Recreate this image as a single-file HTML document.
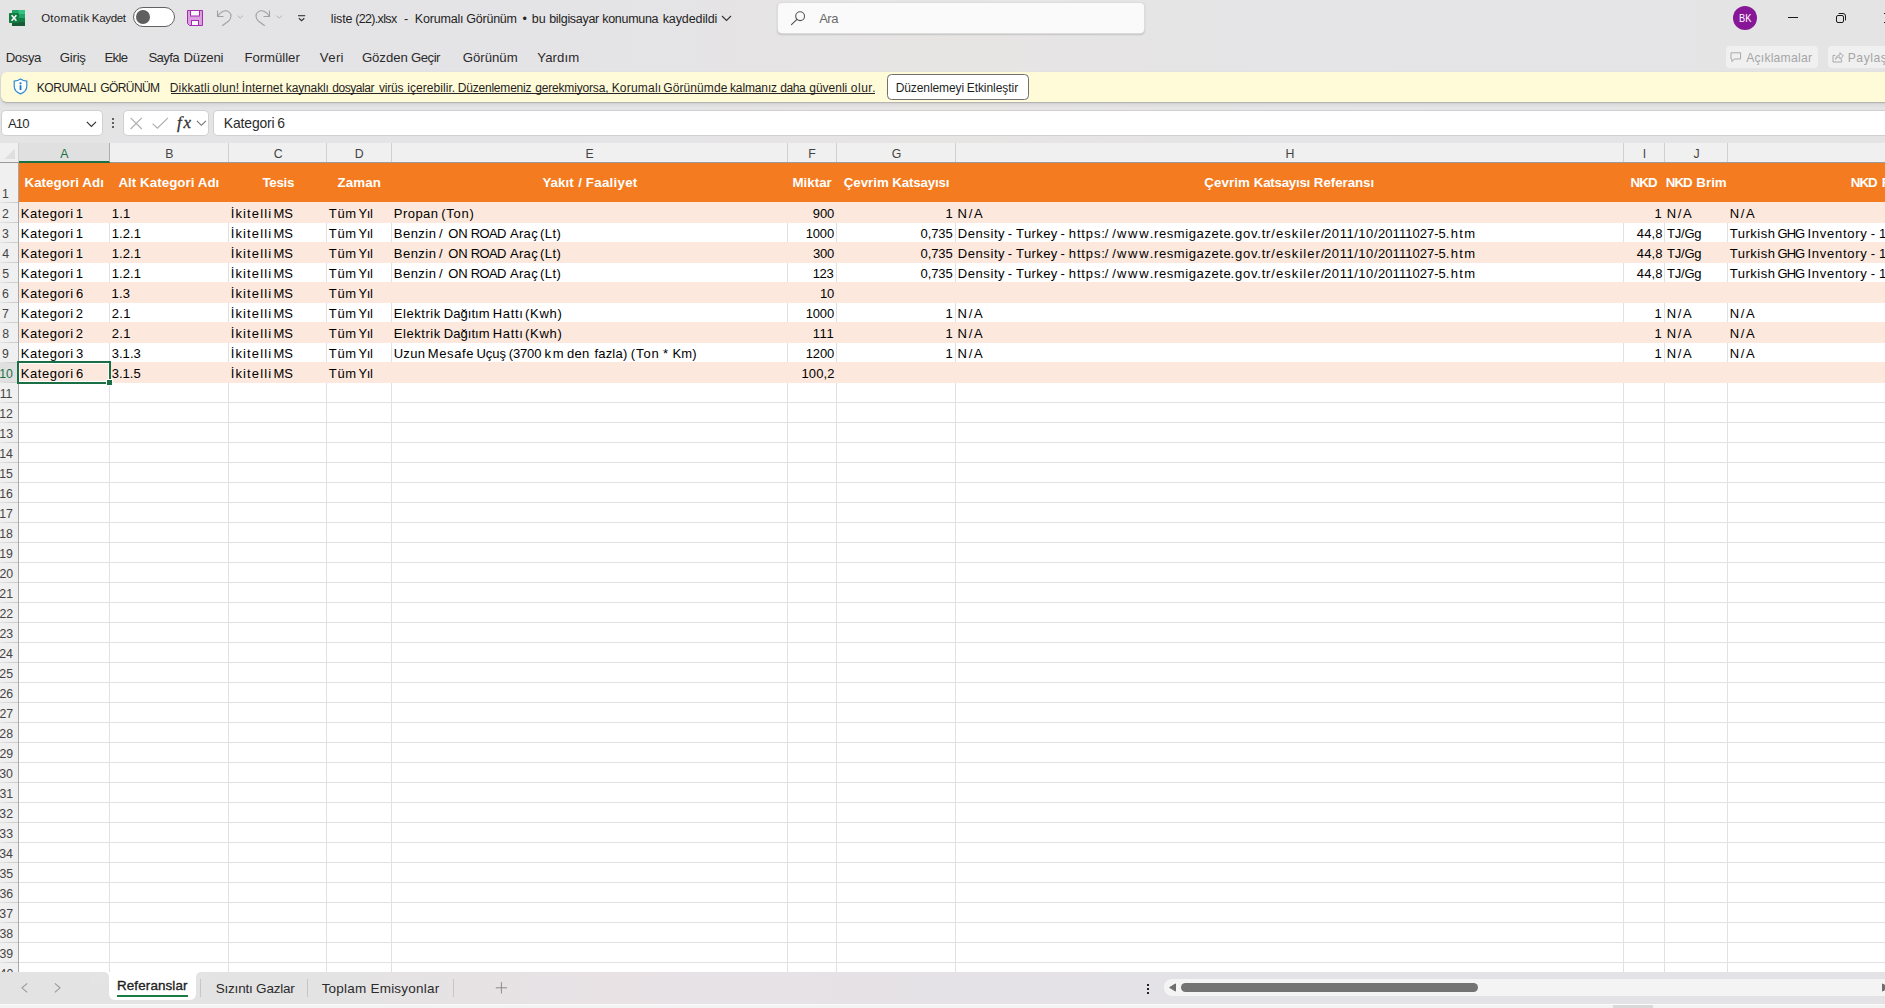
<!DOCTYPE html>
<html><head><meta charset="utf-8"><title>Excel</title>
<style>
html,body{margin:0;padding:0;}
body{width:1885px;height:1008px;overflow:hidden;position:relative;background:#e4e4e4;font-family:"Liberation Sans",sans-serif;}
.a{position:absolute;}
.t{position:absolute;white-space:nowrap;line-height:1;transform-origin:0 0;}
svg{position:absolute;overflow:visible;}
</style></head><body>

<div class="a" style="left:0;top:0;width:1885px;height:143px;background:linear-gradient(90deg,#e4e4e5 0%,#e4e3e6 30%,#e7e5e4 50%,#e5e4e6 68%,#e4e4e5 100%)"></div>
<svg style="left:8px;top:9px" width="18" height="18" viewBox="0 0 18 18">
<rect x="4" y="1" width="13" height="4" fill="#21a366"/><rect x="10.5" y="1" width="6.5" height="4" fill="#33c481"/>
<rect x="4" y="5" width="13" height="4" fill="#107c41"/><rect x="10.5" y="5" width="6.5" height="4" fill="#21a366"/>
<rect x="4" y="9" width="13" height="4" fill="#185c37"/><rect x="10.5" y="9" width="6.5" height="4" fill="#107c41"/>
<rect x="4" y="13" width="13" height="4" fill="#185c37"/>
<rect x="1" y="4" width="10" height="10" rx="0.8" fill="#107c41"/>
<path d="M3.6 6.2 L8.4 11.8 M8.4 6.2 L3.6 11.8" stroke="#fff" stroke-width="1.5" fill="none"/>
</svg>
<div class="a" style="left:133px;top:7px;width:40px;height:18px;border:1px solid #616161;border-radius:10px;background:#fff"></div>
<div class="a" style="left:136px;top:10.1px;width:13.8px;height:13.8px;border-radius:50%;background:#5f5f5f"></div>
<svg style="left:187px;top:10px" width="16" height="16" viewBox="0 0 16 16">
<path d="M0.5 0.5 H15.5 V15.5 H2.5 L0.5 13.5 Z" fill="#dc9fe0" stroke="#a32cb0" stroke-width="1"/>
<rect x="3.5" y="0.5" width="9" height="5.5" fill="#fafafa" stroke="#a32cb0"/>
<rect x="4.5" y="10.5" width="7" height="5" fill="#fafafa" stroke="#a32cb0"/>
</svg>
<svg style="left:216px;top:9px" width="17" height="18" viewBox="0 0 17 18">
<path d="M1.5 1.5 V7.5 H7.5" fill="none" stroke="#a0a0a0" stroke-width="1.1"/>
<path d="M1.7 7.3 C4 3, 9 0.2, 12.6 2.6 C16 5, 15.6 9.6, 12.4 12.2 L6.2 16.8" fill="none" stroke="#a0a0a0" stroke-width="1.1"/>
</svg>
<svg style="left:237.1px;top:15.4px" width="7" height="5" viewBox="0 0 7 5"><path d="M0.5 0.7 L3.2 3.1 L5.9 0.7" fill="none" stroke="#b4b4b4" stroke-width="1"/></svg>
<svg style="left:254.4px;top:9px" width="17" height="18" viewBox="0 0 17 18">
<path d="M15.5 1.5 V7.5 H9.5" fill="none" stroke="#a0a0a0" stroke-width="1.1"/>
<path d="M15.3 7.3 C13 3, 8 0.2, 4.4 2.6 C1 5, 1.4 9.6, 4.6 12.2 L10.8 16.8" fill="none" stroke="#a0a0a0" stroke-width="1.1"/>
</svg>
<svg style="left:276.1px;top:15.4px" width="7" height="5" viewBox="0 0 7 5"><path d="M0.5 0.7 L3.2 3.1 L5.9 0.7" fill="none" stroke="#b4b4b4" stroke-width="1"/></svg>
<svg style="left:297px;top:14px" width="10" height="8" viewBox="0 0 10 8"><path d="M1 1.7 H8.2" stroke="#333" stroke-width="1.1"/><path d="M1.9 4.2 L4.6 6.6 L7.3 4.2" fill="none" stroke="#333" stroke-width="1.2"/></svg>
<svg style="left:721px;top:15px" width="11" height="7" viewBox="0 0 11 7"><path d="M1 1 L5.5 5.5 L10 1" fill="none" stroke="#333" stroke-width="1.1"/></svg>
<div class="a" style="left:778px;top:3px;width:366px;height:30px;background:#fafafa;border-radius:4px;box-shadow:0 0 0 1px #dcdcdc, 0 1px 1.5px 0.5px #c4c4c4"></div>
<svg style="left:790px;top:10px" width="16" height="16" viewBox="0 0 16 16"><circle cx="10.1" cy="6.2" r="4.4" fill="none" stroke="#555" stroke-width="1.1"/><path d="M6.9 9.4 L1.5 14.6" stroke="#555" stroke-width="1.2" stroke-linecap="round"/></svg>
<div class="a" style="left:1733px;top:6px;width:24px;height:24px;border-radius:50%;background:#881798"></div>
<div class="a" style="left:1788px;top:17px;width:10px;height:1px;background:#1a1a1a"></div>
<svg style="left:1835px;top:12px" width="12" height="12" viewBox="0 0 12 12"><rect x="1.5" y="3.5" width="7" height="7" rx="1.5" fill="none" stroke="#1a1a1a" stroke-width="1"/><path d="M3.6 1.5 H8 A2.5 2.5 0 0 1 10.5 4 V8.4" fill="none" stroke="#1a1a1a" stroke-width="1"/></svg>
<svg style="left:1883.5px;top:12.5px" width="10" height="10" viewBox="0 0 10 10"><path d="M0 0 L10 10 M10 0 L0 10" stroke="#1a1a1a" stroke-width="1"/></svg>
<div class="a" style="left:1726px;top:46px;width:92px;height:22px;background:#f0f0f0;border-radius:4px"></div>
<svg style="left:1730px;top:51.5px" width="12" height="11" viewBox="0 0 12 11"><path d="M1 0.8 H10.6 V7 H4.4 L2 9.6 V7 H1 Z" fill="none" stroke="#a8a8a8" stroke-width="1"/></svg>
<div class="a" style="left:1828px;top:46px;width:70px;height:22px;background:#f0f0f0;border-radius:4px"></div>
<svg style="left:1832px;top:51px" width="12" height="12" viewBox="0 0 12 12"><path d="M3.4 4.4 H1 V11 H9.6 V8.2" fill="none" stroke="#a8a8a8" stroke-width="1"/><path d="M3.6 8.4 C4 5.4 6 4 8 4 V1.6 L11.4 5 L8 8.2 V6 C6.2 6 4.8 6.6 3.6 8.4 Z" fill="none" stroke="#a8a8a8" stroke-width="1"/></svg>
<div class="a" style="left:1px;top:72px;width:1890px;height:30px;background:#FFFAD7;border-radius:6px 0 0 6px;box-shadow:0 1px 1px rgba(0,0,0,0.17),0 2px 4px rgba(0,0,0,0.10)"></div>
<svg style="left:13.1px;top:78.1px" width="15" height="17" viewBox="0 0 15 17">
<path d="M7.5 1 C5.6 2.4 3.6 3 1.2 3.1 V8.2 C1.2 11.8 3.8 14.4 7.5 15.9 C11.2 14.4 13.8 11.8 13.8 8.2 V3.1 C11.4 3 9.4 2.4 7.5 1 Z" fill="#fff" stroke="#2e8ad8" stroke-width="1.2"/>
<circle cx="7.5" cy="5.3" r="1.1" fill="#1878d0"/><rect x="6.6" y="7.2" width="1.8" height="4.8" fill="#1878d0"/></svg>
<div class="a" style="left:170.5px;top:93px;width:704px;height:1px;background:#262626"></div>
<div class="a" style="left:887px;top:74px;width:140px;height:23.5px;border:1px solid #707070;border-radius:4.5px;background:#fff"></div>
<div class="a" style="left:2px;top:111px;width:100px;height:24px;background:#fff;border-radius:4px;box-shadow:0 0 0 1px #d0d0d0"></div>
<svg style="left:86px;top:121px" width="11" height="7" viewBox="0 0 11 7"><path d="M0.8 0.9 L5.4 5.5 L10 0.9" fill="none" stroke="#333" stroke-width="1.2"/></svg>
<div class="a" style="left:112.2px;top:118.3px;width:1.6px;height:1.6px;background:#444;border-radius:50%"></div>
<div class="a" style="left:112.2px;top:122.2px;width:1.6px;height:1.6px;background:#444;border-radius:50%"></div>
<div class="a" style="left:112.2px;top:126.1px;width:1.6px;height:1.6px;background:#444;border-radius:50%"></div>
<div class="a" style="left:124px;top:111px;width:84px;height:24px;background:#fff;border-radius:4px;box-shadow:0 0 0 1px #d0d0d0"></div>
<svg style="left:130px;top:117px" width="13" height="13" viewBox="0 0 13 13"><path d="M0.6 0.8 L11.8 12 M11.8 0.8 L0.6 12" stroke="#adadad" stroke-width="1.12"/></svg>
<svg style="left:152px;top:117px" width="17" height="13" viewBox="0 0 17 13"><path d="M0.6 6.6 L5.4 11.2 L16 0.8" fill="none" stroke="#adadad" stroke-width="1.12"/></svg>
<svg style="left:195.8px;top:120.2px" width="11" height="7" viewBox="0 0 11 7"><path d="M0.9 0.9 L5.4 5.3 L9.9 0.9" fill="none" stroke="#757575" stroke-width="1.15"/></svg>
<div class="a" style="left:214px;top:111px;width:1690px;height:24px;background:#fff;border-radius:4px;box-shadow:0 0 0 1px #d0d0d0"></div>
<div class="a" style="left:0;top:143px;width:1885px;height:829px;background:#fff"></div>
<div class="a" style="left:0;top:143px;width:1885px;height:19px;background:#f0f0f0"></div>
<div class="a" style="left:0;top:162px;width:1885px;height:1px;background:#9b9b9b"></div>
<div class="a" style="left:19px;top:143px;width:90px;height:18px;background:#e0e0e0"></div>
<div class="a" style="left:19px;top:161px;width:91px;height:2px;background:#1a7044"></div>
<svg style="left:4px;top:148px" width="12" height="12" viewBox="0 0 12 12"><path d="M11 0.5 V11 H0.5 Z" fill="#dfdfdf"/></svg>
<div class="a" style="left:18px;top:143px;width:1px;height:19px;background:#d0d0d0"></div>
<div class="a" style="left:109px;top:143px;width:1px;height:19px;background:#adadad"></div>
<div class="a" style="left:228px;top:143px;width:1px;height:19px;background:#d0d0d0"></div>
<div class="a" style="left:326px;top:143px;width:1px;height:19px;background:#d0d0d0"></div>
<div class="a" style="left:391px;top:143px;width:1px;height:19px;background:#d0d0d0"></div>
<div class="a" style="left:787px;top:143px;width:1px;height:19px;background:#d0d0d0"></div>
<div class="a" style="left:836px;top:143px;width:1px;height:19px;background:#d0d0d0"></div>
<div class="a" style="left:955px;top:143px;width:1px;height:19px;background:#d0d0d0"></div>
<div class="a" style="left:1623px;top:143px;width:1px;height:19px;background:#d0d0d0"></div>
<div class="a" style="left:1664px;top:143px;width:1px;height:19px;background:#d0d0d0"></div>
<div class="a" style="left:1727px;top:143px;width:1px;height:19px;background:#d0d0d0"></div>
<div class="a" style="left:0;top:163px;width:18px;height:809px;background:#f0f0f0"></div>
<div class="a" style="left:18px;top:163px;width:1px;height:809px;background:#a8a8a8"></div>
<div class="a" style="left:0;top:363px;width:18px;height:19px;background:#e0e0e0"></div>
<div class="a" style="left:0;top:202px;width:18px;height:1px;background:linear-gradient(90deg,#e4e4e4,#d2d2d2 60%,#cccccc)"></div>
<div class="a" style="left:0;top:222px;width:18px;height:1px;background:linear-gradient(90deg,#e4e4e4,#d2d2d2 60%,#cccccc)"></div>
<div class="a" style="left:0;top:242px;width:18px;height:1px;background:linear-gradient(90deg,#e4e4e4,#d2d2d2 60%,#cccccc)"></div>
<div class="a" style="left:0;top:262px;width:18px;height:1px;background:linear-gradient(90deg,#e4e4e4,#d2d2d2 60%,#cccccc)"></div>
<div class="a" style="left:0;top:282px;width:18px;height:1px;background:linear-gradient(90deg,#e4e4e4,#d2d2d2 60%,#cccccc)"></div>
<div class="a" style="left:0;top:302px;width:18px;height:1px;background:linear-gradient(90deg,#e4e4e4,#d2d2d2 60%,#cccccc)"></div>
<div class="a" style="left:0;top:322px;width:18px;height:1px;background:linear-gradient(90deg,#e4e4e4,#d2d2d2 60%,#cccccc)"></div>
<div class="a" style="left:0;top:342px;width:18px;height:1px;background:linear-gradient(90deg,#e4e4e4,#d2d2d2 60%,#cccccc)"></div>
<div class="a" style="left:0;top:362px;width:18px;height:1px;background:linear-gradient(90deg,#e4e4e4,#d2d2d2 60%,#cccccc)"></div>
<div class="a" style="left:0;top:382px;width:18px;height:1px;background:linear-gradient(90deg,#e4e4e4,#d2d2d2 60%,#cccccc)"></div>
<div class="a" style="left:0;top:402px;width:18px;height:1px;background:linear-gradient(90deg,#e4e4e4,#d2d2d2 60%,#cccccc)"></div>
<div class="a" style="left:0;top:422px;width:18px;height:1px;background:linear-gradient(90deg,#e4e4e4,#d2d2d2 60%,#cccccc)"></div>
<div class="a" style="left:0;top:442px;width:18px;height:1px;background:linear-gradient(90deg,#e4e4e4,#d2d2d2 60%,#cccccc)"></div>
<div class="a" style="left:0;top:462px;width:18px;height:1px;background:linear-gradient(90deg,#e4e4e4,#d2d2d2 60%,#cccccc)"></div>
<div class="a" style="left:0;top:482px;width:18px;height:1px;background:linear-gradient(90deg,#e4e4e4,#d2d2d2 60%,#cccccc)"></div>
<div class="a" style="left:0;top:502px;width:18px;height:1px;background:linear-gradient(90deg,#e4e4e4,#d2d2d2 60%,#cccccc)"></div>
<div class="a" style="left:0;top:522px;width:18px;height:1px;background:linear-gradient(90deg,#e4e4e4,#d2d2d2 60%,#cccccc)"></div>
<div class="a" style="left:0;top:542px;width:18px;height:1px;background:linear-gradient(90deg,#e4e4e4,#d2d2d2 60%,#cccccc)"></div>
<div class="a" style="left:0;top:562px;width:18px;height:1px;background:linear-gradient(90deg,#e4e4e4,#d2d2d2 60%,#cccccc)"></div>
<div class="a" style="left:0;top:582px;width:18px;height:1px;background:linear-gradient(90deg,#e4e4e4,#d2d2d2 60%,#cccccc)"></div>
<div class="a" style="left:0;top:602px;width:18px;height:1px;background:linear-gradient(90deg,#e4e4e4,#d2d2d2 60%,#cccccc)"></div>
<div class="a" style="left:0;top:622px;width:18px;height:1px;background:linear-gradient(90deg,#e4e4e4,#d2d2d2 60%,#cccccc)"></div>
<div class="a" style="left:0;top:642px;width:18px;height:1px;background:linear-gradient(90deg,#e4e4e4,#d2d2d2 60%,#cccccc)"></div>
<div class="a" style="left:0;top:662px;width:18px;height:1px;background:linear-gradient(90deg,#e4e4e4,#d2d2d2 60%,#cccccc)"></div>
<div class="a" style="left:0;top:682px;width:18px;height:1px;background:linear-gradient(90deg,#e4e4e4,#d2d2d2 60%,#cccccc)"></div>
<div class="a" style="left:0;top:702px;width:18px;height:1px;background:linear-gradient(90deg,#e4e4e4,#d2d2d2 60%,#cccccc)"></div>
<div class="a" style="left:0;top:722px;width:18px;height:1px;background:linear-gradient(90deg,#e4e4e4,#d2d2d2 60%,#cccccc)"></div>
<div class="a" style="left:0;top:742px;width:18px;height:1px;background:linear-gradient(90deg,#e4e4e4,#d2d2d2 60%,#cccccc)"></div>
<div class="a" style="left:0;top:762px;width:18px;height:1px;background:linear-gradient(90deg,#e4e4e4,#d2d2d2 60%,#cccccc)"></div>
<div class="a" style="left:0;top:782px;width:18px;height:1px;background:linear-gradient(90deg,#e4e4e4,#d2d2d2 60%,#cccccc)"></div>
<div class="a" style="left:0;top:802px;width:18px;height:1px;background:linear-gradient(90deg,#e4e4e4,#d2d2d2 60%,#cccccc)"></div>
<div class="a" style="left:0;top:822px;width:18px;height:1px;background:linear-gradient(90deg,#e4e4e4,#d2d2d2 60%,#cccccc)"></div>
<div class="a" style="left:0;top:842px;width:18px;height:1px;background:linear-gradient(90deg,#e4e4e4,#d2d2d2 60%,#cccccc)"></div>
<div class="a" style="left:0;top:862px;width:18px;height:1px;background:linear-gradient(90deg,#e4e4e4,#d2d2d2 60%,#cccccc)"></div>
<div class="a" style="left:0;top:882px;width:18px;height:1px;background:linear-gradient(90deg,#e4e4e4,#d2d2d2 60%,#cccccc)"></div>
<div class="a" style="left:0;top:902px;width:18px;height:1px;background:linear-gradient(90deg,#e4e4e4,#d2d2d2 60%,#cccccc)"></div>
<div class="a" style="left:0;top:922px;width:18px;height:1px;background:linear-gradient(90deg,#e4e4e4,#d2d2d2 60%,#cccccc)"></div>
<div class="a" style="left:0;top:942px;width:18px;height:1px;background:linear-gradient(90deg,#e4e4e4,#d2d2d2 60%,#cccccc)"></div>
<div class="a" style="left:0;top:962px;width:18px;height:1px;background:linear-gradient(90deg,#e4e4e4,#d2d2d2 60%,#cccccc)"></div>
<div class="a" style="left:19px;top:382px;width:1866px;height:1px;background:#e1e1e1"></div>
<div class="a" style="left:19px;top:402px;width:1866px;height:1px;background:#e1e1e1"></div>
<div class="a" style="left:19px;top:422px;width:1866px;height:1px;background:#e1e1e1"></div>
<div class="a" style="left:19px;top:442px;width:1866px;height:1px;background:#e1e1e1"></div>
<div class="a" style="left:19px;top:462px;width:1866px;height:1px;background:#e1e1e1"></div>
<div class="a" style="left:19px;top:482px;width:1866px;height:1px;background:#e1e1e1"></div>
<div class="a" style="left:19px;top:502px;width:1866px;height:1px;background:#e1e1e1"></div>
<div class="a" style="left:19px;top:522px;width:1866px;height:1px;background:#e1e1e1"></div>
<div class="a" style="left:19px;top:542px;width:1866px;height:1px;background:#e1e1e1"></div>
<div class="a" style="left:19px;top:562px;width:1866px;height:1px;background:#e1e1e1"></div>
<div class="a" style="left:19px;top:582px;width:1866px;height:1px;background:#e1e1e1"></div>
<div class="a" style="left:19px;top:602px;width:1866px;height:1px;background:#e1e1e1"></div>
<div class="a" style="left:19px;top:622px;width:1866px;height:1px;background:#e1e1e1"></div>
<div class="a" style="left:19px;top:642px;width:1866px;height:1px;background:#e1e1e1"></div>
<div class="a" style="left:19px;top:662px;width:1866px;height:1px;background:#e1e1e1"></div>
<div class="a" style="left:19px;top:682px;width:1866px;height:1px;background:#e1e1e1"></div>
<div class="a" style="left:19px;top:702px;width:1866px;height:1px;background:#e1e1e1"></div>
<div class="a" style="left:19px;top:722px;width:1866px;height:1px;background:#e1e1e1"></div>
<div class="a" style="left:19px;top:742px;width:1866px;height:1px;background:#e1e1e1"></div>
<div class="a" style="left:19px;top:762px;width:1866px;height:1px;background:#e1e1e1"></div>
<div class="a" style="left:19px;top:782px;width:1866px;height:1px;background:#e1e1e1"></div>
<div class="a" style="left:19px;top:802px;width:1866px;height:1px;background:#e1e1e1"></div>
<div class="a" style="left:19px;top:822px;width:1866px;height:1px;background:#e1e1e1"></div>
<div class="a" style="left:19px;top:842px;width:1866px;height:1px;background:#e1e1e1"></div>
<div class="a" style="left:19px;top:862px;width:1866px;height:1px;background:#e1e1e1"></div>
<div class="a" style="left:19px;top:882px;width:1866px;height:1px;background:#e1e1e1"></div>
<div class="a" style="left:19px;top:902px;width:1866px;height:1px;background:#e1e1e1"></div>
<div class="a" style="left:19px;top:922px;width:1866px;height:1px;background:#e1e1e1"></div>
<div class="a" style="left:19px;top:942px;width:1866px;height:1px;background:#e1e1e1"></div>
<div class="a" style="left:19px;top:962px;width:1866px;height:1px;background:#e1e1e1"></div>
<div class="a" style="left:109px;top:203px;width:1px;height:769px;background:#e1e1e1"></div>
<div class="a" style="left:228px;top:203px;width:1px;height:769px;background:#e1e1e1"></div>
<div class="a" style="left:326px;top:203px;width:1px;height:769px;background:#e1e1e1"></div>
<div class="a" style="left:391px;top:203px;width:1px;height:769px;background:#e1e1e1"></div>
<div class="a" style="left:787px;top:203px;width:1px;height:769px;background:#e1e1e1"></div>
<div class="a" style="left:836px;top:203px;width:1px;height:769px;background:#e1e1e1"></div>
<div class="a" style="left:955px;top:203px;width:1px;height:769px;background:#e1e1e1"></div>
<div class="a" style="left:1623px;top:203px;width:1px;height:769px;background:#e1e1e1"></div>
<div class="a" style="left:1664px;top:203px;width:1px;height:769px;background:#e1e1e1"></div>
<div class="a" style="left:1727px;top:203px;width:1px;height:769px;background:#e1e1e1"></div>
<div class="a" style="left:19px;top:163px;width:1866px;height:39px;background:#F47B20"></div>
<div class="a" style="left:19px;top:202px;width:1866px;height:21px;background:#FCE8DC"></div>
<div class="a" style="left:19px;top:242px;width:1866px;height:21px;background:#FCE8DC"></div>
<div class="a" style="left:19px;top:282px;width:1866px;height:21px;background:#FCE8DC"></div>
<div class="a" style="left:19px;top:322px;width:1866px;height:21px;background:#FCE8DC"></div>
<div class="a" style="left:19px;top:362px;width:1866px;height:21px;background:#FCE8DC"></div>
<div class="a" style="left:19px;top:363px;width:90px;height:19px;box-shadow:0 0 0 1px #fff inset"></div>
<div class="a" style="left:17px;top:361px;width:90px;height:19px;border:2px solid #1a7044"></div>
<div class="a" style="left:106px;top:379px;width:5px;height:5px;background:#1a7044;border:1px solid #fff"></div>
<div class="a" style="left:0;top:972px;width:1885px;height:32px;background:linear-gradient(90deg,#e3e3e3 0%,#e4e3e4 18%,#e8e2e5 32%,#e5e2e6 48%,#e3e2e7 65%,#e3e3e6 100%)"></div>
<div class="a" style="left:0;top:1004px;width:1885px;height:4px;background:#f3f3f3"></div>
<div class="a" style="left:0;top:1004px;width:1885px;height:1px;background:#fbfbfb"></div>
<div class="a" style="left:1613px;top:1005px;width:40px;height:3px;background:#d9d9d9"></div>
<div class="a" style="left:103px;top:972px;width:99px;height:8px;background:#fff"></div>
<div class="a" style="left:90px;top:972px;width:19px;height:12px;background:#e4e4e4;border-radius:0 5px 0 0"></div>
<div class="a" style="left:196px;top:972px;width:19px;height:12px;background:#e4e4e4;border-radius:5px 0 0 0"></div>
<div class="a" style="left:109px;top:972px;width:87px;height:28px;background:#fff;border-radius:0 0 6px 6px"></div>
<div class="a" style="left:117px;top:995px;width:71px;height:2px;background:#1a7c43"></div>
<div class="a" style="left:200px;top:979px;width:1px;height:18px;background:#c6c6c6"></div>
<div class="a" style="left:307px;top:979px;width:1px;height:18px;background:#c6c6c6"></div>
<div class="a" style="left:453px;top:979px;width:1px;height:18px;background:#c6c6c6"></div>
<svg style="left:20px;top:982px" width="9" height="12" viewBox="0 0 9 12"><path d="M7.2 1.3 L2 5.8 L7.2 10.3" fill="none" stroke="#9a9a9a" stroke-width="1.1"/></svg>
<svg style="left:53px;top:982px" width="9" height="12" viewBox="0 0 9 12"><path d="M1.8 1.3 L7 5.8 L1.8 10.3" fill="none" stroke="#9a9a9a" stroke-width="1.1"/></svg>
<svg style="left:495px;top:982px" width="13" height="12" viewBox="0 0 13 12"><path d="M6.4 0.2 V11.4 M0.8 5.8 H12" stroke="#8a8a8a" stroke-width="1"/></svg>
<div class="a" style="left:1147px;top:984px;width:2px;height:2px;background:#222"></div>
<div class="a" style="left:1147px;top:988px;width:2px;height:2px;background:#222"></div>
<div class="a" style="left:1147px;top:992px;width:2px;height:2px;background:#222"></div>
<div class="a" style="left:1164px;top:979px;width:730px;height:17px;background:#f4f4f4;border-radius:8px 0 0 8px"></div>
<svg style="left:1168px;top:983px" width="8" height="9" viewBox="0 0 8 9"><path d="M7.5 0.9 V8.1 L1.6 4.5 Z" fill="#6e6e6e" stroke="#6e6e6e" stroke-width="1" stroke-linejoin="round"/></svg>
<div class="a" style="left:1181px;top:983px;width:296.5px;height:9px;background:#737373;border-radius:4.5px"></div>
<svg style="left:1882px;top:983px" width="8" height="9" viewBox="0 0 8 9"><path d="M0.5 0.9 V8.1 L6.4 4.5 Z" fill="#6e6e6e" stroke="#6e6e6e" stroke-width="1" stroke-linejoin="round"/></svg>
<span class="t" style="left:41.15px;top:13.20px;color:#242424;font-size:11.5px;font-weight:normal;letter-spacing:0.286px;">Otomatik</span>
<span class="t" style="left:91.86px;top:13.20px;color:#242424;font-size:11.5px;font-weight:normal;letter-spacing:-0.324px;">Kaydet</span>
<span class="t" style="left:330.84px;top:13.00px;color:#242424;font-size:12.5px;font-weight:normal;letter-spacing:-0.147px;">liste</span>
<span class="t" style="left:355.14px;top:13.00px;color:#242424;font-size:12.5px;font-weight:normal;letter-spacing:-0.647px;">(22).xlsx</span>
<span class="t" style="left:404.08px;top:13.00px;color:#242424;font-size:12.5px;font-weight:normal;">-</span>
<span class="t" style="left:414.79px;top:13.00px;color:#242424;font-size:12.5px;font-weight:normal;letter-spacing:-0.185px;">Korumalı</span>
<span class="t" style="left:466.27px;top:13.00px;color:#242424;font-size:12.5px;font-weight:normal;letter-spacing:-0.231px;">Görünüm</span>
<span class="t" style="left:522.52px;top:13.00px;color:#242424;font-size:12.5px;font-weight:normal;">•</span>
<span class="t" style="left:531.77px;top:13.00px;color:#242424;font-size:12.5px;font-weight:normal;letter-spacing:0.119px;">bu</span>
<span class="t" style="left:549.21px;top:13.00px;color:#242424;font-size:12.5px;font-weight:normal;letter-spacing:-0.314px;">bilgisayar</span>
<span class="t" style="left:602.26px;top:13.00px;color:#242424;font-size:12.5px;font-weight:normal;letter-spacing:-0.294px;">konumuna</span>
<span class="t" style="left:662.70px;top:13.00px;color:#242424;font-size:12.5px;font-weight:normal;letter-spacing:-0.100px;">kaydedildi</span>
<span class="t" style="left:819.25px;top:11.50px;color:#6a6a6a;font-size:13px;font-weight:normal;letter-spacing:-0.555px;">Ara</span>
<span class="t" style="left:1738.94px;top:12.90px;color:#fff;font-size:11px;font-weight:normal;transform:scaleX(0.84);">BK</span>
<span class="t" style="left:5.65px;top:51.00px;color:#2b2b2b;font-size:13.2px;font-weight:normal;letter-spacing:-0.403px;">Dosya</span>
<span class="t" style="left:59.85px;top:51.00px;color:#2b2b2b;font-size:13.2px;font-weight:normal;letter-spacing:-0.257px;">Giriş</span>
<span class="t" style="left:104.49px;top:51.00px;color:#2b2b2b;font-size:13.2px;font-weight:normal;letter-spacing:-0.704px;">Ekle</span>
<span class="t" style="left:148.39px;top:51.00px;color:#2b2b2b;font-size:13.2px;font-weight:normal;letter-spacing:-0.657px;">Sayfa</span>
<span class="t" style="left:183.49px;top:51.00px;color:#2b2b2b;font-size:13.2px;font-weight:normal;letter-spacing:-0.216px;">Düzeni</span>
<span class="t" style="left:244.49px;top:51.00px;color:#2b2b2b;font-size:13.2px;font-weight:normal;letter-spacing:-0.047px;">Formüller</span>
<span class="t" style="left:319.85px;top:51.00px;color:#2b2b2b;font-size:13.2px;font-weight:normal;letter-spacing:0.329px;">Veri</span>
<span class="t" style="left:361.94px;top:51.00px;color:#2b2b2b;font-size:13.2px;font-weight:normal;letter-spacing:-0.080px;">Gözden</span>
<span class="t" style="left:411.11px;top:51.00px;color:#2b2b2b;font-size:13.2px;font-weight:normal;letter-spacing:-0.540px;">Geçir</span>
<span class="t" style="left:462.85px;top:51.00px;color:#2b2b2b;font-size:13.2px;font-weight:normal;letter-spacing:-0.031px;">Görünüm</span>
<span class="t" style="left:537.28px;top:51.00px;color:#2b2b2b;font-size:13.2px;font-weight:normal;letter-spacing:0.093px;">Yardım</span>
<span class="t" style="left:1746.14px;top:51.80px;color:#a6a6a6;font-size:12.2px;font-weight:normal;letter-spacing:0.216px;">Açıklamalar</span>
<span class="t" style="left:1847.70px;top:51.80px;color:#a6a6a6;font-size:12.2px;font-weight:normal;letter-spacing:0.520px;">Paylaş</span>
<span class="t" style="left:36.76px;top:81.90px;color:#1f1f1f;font-size:12px;font-weight:normal;letter-spacing:-0.421px;">KORUMALI</span>
<span class="t" style="left:100.28px;top:81.90px;color:#1f1f1f;font-size:12px;font-weight:normal;letter-spacing:-0.593px;">GÖRÜNÜM</span>
<span class="t" style="left:169.76px;top:81.80px;color:#1f1f1f;font-size:12px;font-weight:normal;letter-spacing:0.166px;">Dikkatli</span>
<span class="t" style="left:212.28px;top:81.80px;color:#1f1f1f;font-size:12px;font-weight:normal;letter-spacing:0.201px;">olun!</span>
<span class="t" style="left:241.85px;top:81.80px;color:#1f1f1f;font-size:12px;font-weight:normal;letter-spacing:0.054px;">İnternet</span>
<span class="t" style="left:285.81px;top:81.80px;color:#1f1f1f;font-size:12px;font-weight:normal;letter-spacing:-0.132px;">kaynaklı</span>
<span class="t" style="left:332.32px;top:81.80px;color:#1f1f1f;font-size:12px;font-weight:normal;letter-spacing:-0.457px;">dosyalar</span>
<span class="t" style="left:378.88px;top:81.80px;color:#1f1f1f;font-size:12px;font-weight:normal;letter-spacing:-0.162px;">virüs</span>
<span class="t" style="left:407.23px;top:81.80px;color:#1f1f1f;font-size:12px;font-weight:normal;letter-spacing:0.053px;">içerebilir.</span>
<span class="t" style="left:457.75px;top:81.80px;color:#1f1f1f;font-size:12px;font-weight:normal;letter-spacing:-0.205px;">Düzenlemeniz</span>
<span class="t" style="left:535.14px;top:81.80px;color:#1f1f1f;font-size:12px;font-weight:normal;letter-spacing:-0.165px;">gerekmiyorsa,</span>
<span class="t" style="left:611.64px;top:81.80px;color:#1f1f1f;font-size:12px;font-weight:normal;letter-spacing:0.221px;">Korumalı</span>
<span class="t" style="left:663.28px;top:81.80px;color:#1f1f1f;font-size:12px;font-weight:normal;letter-spacing:0.089px;">Görünümde</span>
<span class="t" style="left:730.00px;top:81.80px;color:#1f1f1f;font-size:12px;font-weight:normal;letter-spacing:-0.129px;">kalmanız</span>
<span class="t" style="left:780.23px;top:81.80px;color:#1f1f1f;font-size:12px;font-weight:normal;letter-spacing:-0.375px;">daha</span>
<span class="t" style="left:809.29px;top:81.80px;color:#1f1f1f;font-size:12px;font-weight:normal;letter-spacing:-0.004px;">güvenli</span>
<span class="t" style="left:850.82px;top:81.80px;color:#1f1f1f;font-size:12px;font-weight:normal;letter-spacing:0.497px;">olur.</span>
<span class="t" style="left:895.69px;top:81.80px;color:#1f1f1f;font-size:12px;font-weight:normal;letter-spacing:-0.089px;">Düzenlemeyi</span>
<span class="t" style="left:966.69px;top:81.80px;color:#1f1f1f;font-size:12px;font-weight:normal;letter-spacing:-0.055px;">Etkinleştir</span>
<span class="t" style="left:7.94px;top:117.00px;color:#2b2b2b;font-size:13.1px;font-weight:normal;letter-spacing:-0.814px;">A10</span>
<span class="t" style="left:177.03px;top:113.90px;color:#333;font-size:17px;font-weight:normal;font-family:'Liberation Serif',serif;font-style:italic;-webkit-text-stroke:0.3px #333;letter-spacing:1.809px;">fx</span>
<span class="t" style="left:223.84px;top:117.00px;color:#2b2b2b;font-size:13.9px;font-weight:normal;letter-spacing:-0.123px;">Kategori</span>
<span class="t" style="left:277.24px;top:117.00px;color:#2b2b2b;font-size:13.9px;font-weight:normal;">6</span>
<span class="t" style="left:60.33px;top:148.00px;color:#1a7044;font-size:12.3px;font-weight:normal;">A</span>
<span class="t" style="left:165.13px;top:148.00px;color:#444;font-size:12.3px;font-weight:normal;">B</span>
<span class="t" style="left:273.68px;top:148.00px;color:#444;font-size:12.3px;font-weight:normal;">C</span>
<span class="t" style="left:354.79px;top:148.00px;color:#444;font-size:12.3px;font-weight:normal;">D</span>
<span class="t" style="left:585.61px;top:148.00px;color:#444;font-size:12.3px;font-weight:normal;">E</span>
<span class="t" style="left:808.36px;top:148.00px;color:#444;font-size:12.3px;font-weight:normal;">F</span>
<span class="t" style="left:891.86px;top:148.00px;color:#444;font-size:12.3px;font-weight:normal;">G</span>
<span class="t" style="left:1285.53px;top:148.00px;color:#444;font-size:12.3px;font-weight:normal;">H</span>
<span class="t" style="left:1642.81px;top:148.00px;color:#444;font-size:12.3px;font-weight:normal;">I</span>
<span class="t" style="left:1693.53px;top:148.00px;color:#444;font-size:12.3px;font-weight:normal;">J</span>
<div class="a" style="left:0;top:0;width:1885px;height:972px;overflow:hidden"><span class="t" style="left:1.94px;top:188.00px;color:#444;font-size:12.3px;font-weight:normal;">1</span></div>
<div class="a" style="left:0;top:0;width:1885px;height:972px;overflow:hidden"><span class="t" style="left:2.09px;top:208.00px;color:#444;font-size:12.3px;font-weight:normal;">2</span></div>
<div class="a" style="left:0;top:0;width:1885px;height:972px;overflow:hidden"><span class="t" style="left:2.11px;top:228.00px;color:#444;font-size:12.3px;font-weight:normal;">3</span></div>
<div class="a" style="left:0;top:0;width:1885px;height:972px;overflow:hidden"><span class="t" style="left:2.20px;top:248.00px;color:#444;font-size:12.3px;font-weight:normal;">4</span></div>
<div class="a" style="left:0;top:0;width:1885px;height:972px;overflow:hidden"><span class="t" style="left:2.15px;top:268.00px;color:#444;font-size:12.3px;font-weight:normal;">5</span></div>
<div class="a" style="left:0;top:0;width:1885px;height:972px;overflow:hidden"><span class="t" style="left:2.08px;top:288.00px;color:#444;font-size:12.3px;font-weight:normal;">6</span></div>
<div class="a" style="left:0;top:0;width:1885px;height:972px;overflow:hidden"><span class="t" style="left:2.10px;top:308.00px;color:#444;font-size:12.3px;font-weight:normal;">7</span></div>
<div class="a" style="left:0;top:0;width:1885px;height:972px;overflow:hidden"><span class="t" style="left:2.13px;top:328.00px;color:#444;font-size:12.3px;font-weight:normal;">8</span></div>
<div class="a" style="left:0;top:0;width:1885px;height:972px;overflow:hidden"><span class="t" style="left:2.10px;top:348.00px;color:#444;font-size:12.3px;font-weight:normal;">9</span></div>
<div class="a" style="left:0;top:0;width:1885px;height:972px;overflow:hidden"><span class="t" style="left:-0.88px;top:368.00px;color:#1a7044;font-size:12.3px;font-weight:normal;">10</span></div>
<div class="a" style="left:0;top:0;width:1885px;height:972px;overflow:hidden"><span class="t" style="left:-0.35px;top:388.00px;color:#444;font-size:12.3px;font-weight:normal;">11</span></div>
<div class="a" style="left:0;top:0;width:1885px;height:972px;overflow:hidden"><span class="t" style="left:-0.76px;top:408.00px;color:#444;font-size:12.3px;font-weight:normal;">12</span></div>
<div class="a" style="left:0;top:0;width:1885px;height:972px;overflow:hidden"><span class="t" style="left:-0.71px;top:428.00px;color:#444;font-size:12.3px;font-weight:normal;">13</span></div>
<div class="a" style="left:0;top:0;width:1885px;height:972px;overflow:hidden"><span class="t" style="left:-0.89px;top:448.00px;color:#444;font-size:12.3px;font-weight:normal;">14</span></div>
<div class="a" style="left:0;top:0;width:1885px;height:972px;overflow:hidden"><span class="t" style="left:-0.72px;top:468.00px;color:#444;font-size:12.3px;font-weight:normal;">15</span></div>
<div class="a" style="left:0;top:0;width:1885px;height:972px;overflow:hidden"><span class="t" style="left:-0.77px;top:488.00px;color:#444;font-size:12.3px;font-weight:normal;">16</span></div>
<div class="a" style="left:0;top:0;width:1885px;height:972px;overflow:hidden"><span class="t" style="left:-0.76px;top:508.00px;color:#444;font-size:12.3px;font-weight:normal;">17</span></div>
<div class="a" style="left:0;top:0;width:1885px;height:972px;overflow:hidden"><span class="t" style="left:-0.72px;top:528.00px;color:#444;font-size:12.3px;font-weight:normal;">18</span></div>
<div class="a" style="left:0;top:0;width:1885px;height:972px;overflow:hidden"><span class="t" style="left:-0.75px;top:548.00px;color:#444;font-size:12.3px;font-weight:normal;">19</span></div>
<div class="a" style="left:0;top:0;width:1885px;height:972px;overflow:hidden"><span class="t" style="left:-0.58px;top:568.00px;color:#444;font-size:12.3px;font-weight:normal;">20</span></div>
<div class="a" style="left:0;top:0;width:1885px;height:972px;overflow:hidden"><span class="t" style="left:-0.67px;top:588.00px;color:#444;font-size:12.3px;font-weight:normal;">21</span></div>
<div class="a" style="left:0;top:0;width:1885px;height:972px;overflow:hidden"><span class="t" style="left:-0.58px;top:608.00px;color:#444;font-size:12.3px;font-weight:normal;">22</span></div>
<div class="a" style="left:0;top:0;width:1885px;height:972px;overflow:hidden"><span class="t" style="left:-0.64px;top:628.00px;color:#444;font-size:12.3px;font-weight:normal;">23</span></div>
<div class="a" style="left:0;top:0;width:1885px;height:972px;overflow:hidden"><span class="t" style="left:-0.75px;top:648.00px;color:#444;font-size:12.3px;font-weight:normal;">24</span></div>
<div class="a" style="left:0;top:0;width:1885px;height:972px;overflow:hidden"><span class="t" style="left:-0.67px;top:668.00px;color:#444;font-size:12.3px;font-weight:normal;">25</span></div>
<div class="a" style="left:0;top:0;width:1885px;height:972px;overflow:hidden"><span class="t" style="left:-0.57px;top:688.00px;color:#444;font-size:12.3px;font-weight:normal;">26</span></div>
<div class="a" style="left:0;top:0;width:1885px;height:972px;overflow:hidden"><span class="t" style="left:-0.58px;top:708.00px;color:#444;font-size:12.3px;font-weight:normal;">27</span></div>
<div class="a" style="left:0;top:0;width:1885px;height:972px;overflow:hidden"><span class="t" style="left:-0.67px;top:728.00px;color:#444;font-size:12.3px;font-weight:normal;">28</span></div>
<div class="a" style="left:0;top:0;width:1885px;height:972px;overflow:hidden"><span class="t" style="left:-0.56px;top:748.00px;color:#444;font-size:12.3px;font-weight:normal;">29</span></div>
<div class="a" style="left:0;top:0;width:1885px;height:972px;overflow:hidden"><span class="t" style="left:-0.77px;top:768.00px;color:#444;font-size:12.3px;font-weight:normal;">30</span></div>
<div class="a" style="left:0;top:0;width:1885px;height:972px;overflow:hidden"><span class="t" style="left:-0.55px;top:788.00px;color:#444;font-size:12.3px;font-weight:normal;">31</span></div>
<div class="a" style="left:0;top:0;width:1885px;height:972px;overflow:hidden"><span class="t" style="left:-0.65px;top:808.00px;color:#444;font-size:12.3px;font-weight:normal;">32</span></div>
<div class="a" style="left:0;top:0;width:1885px;height:972px;overflow:hidden"><span class="t" style="left:-0.70px;top:828.00px;color:#444;font-size:12.3px;font-weight:normal;">33</span></div>
<div class="a" style="left:0;top:0;width:1885px;height:972px;overflow:hidden"><span class="t" style="left:-0.75px;top:848.00px;color:#444;font-size:12.3px;font-weight:normal;">34</span></div>
<div class="a" style="left:0;top:0;width:1885px;height:972px;overflow:hidden"><span class="t" style="left:-0.57px;top:868.00px;color:#444;font-size:12.3px;font-weight:normal;">35</span></div>
<div class="a" style="left:0;top:0;width:1885px;height:972px;overflow:hidden"><span class="t" style="left:-0.64px;top:888.00px;color:#444;font-size:12.3px;font-weight:normal;">36</span></div>
<div class="a" style="left:0;top:0;width:1885px;height:972px;overflow:hidden"><span class="t" style="left:-0.65px;top:908.00px;color:#444;font-size:12.3px;font-weight:normal;">37</span></div>
<div class="a" style="left:0;top:0;width:1885px;height:972px;overflow:hidden"><span class="t" style="left:-0.57px;top:928.00px;color:#444;font-size:12.3px;font-weight:normal;">38</span></div>
<div class="a" style="left:0;top:0;width:1885px;height:972px;overflow:hidden"><span class="t" style="left:-0.58px;top:948.00px;color:#444;font-size:12.3px;font-weight:normal;">39</span></div>
<div class="a" style="left:0;top:0;width:1885px;height:972px;overflow:hidden"><span class="t" style="left:-0.43px;top:968.00px;color:#444;font-size:12.3px;font-weight:normal;">40</span></div>
<span class="t" style="left:24.45px;top:175.80px;color:#fff;font-size:13.33px;font-weight:bold;letter-spacing:0.063px;">Kategori Adı</span>
<span class="t" style="left:118.43px;top:175.80px;color:#fff;font-size:13.33px;font-weight:bold;letter-spacing:0.044px;">Alt Kategori Adı</span>
<span class="t" style="left:262.47px;top:175.80px;color:#fff;font-size:13.33px;font-weight:bold;letter-spacing:-0.302px;">Tesis</span>
<span class="t" style="left:337.59px;top:175.80px;color:#fff;font-size:13.33px;font-weight:bold;letter-spacing:0.115px;">Zaman</span>
<span class="t" style="left:542.39px;top:175.80px;color:#fff;font-size:13.33px;font-weight:bold;letter-spacing:0.067px;">Yakıt</span>
<span class="t" style="left:578.19px;top:175.80px;color:#fff;font-size:13.33px;font-weight:bold;">/</span>
<span class="t" style="left:585.86px;top:175.80px;color:#fff;font-size:13.33px;font-weight:bold;letter-spacing:0.253px;">Faaliyet</span>
<span class="t" style="left:792.54px;top:175.80px;color:#fff;font-size:13.33px;font-weight:bold;letter-spacing:-0.014px;">Miktar</span>
<span class="t" style="left:843.72px;top:175.80px;color:#fff;font-size:13.33px;font-weight:bold;letter-spacing:-0.027px;">Çevrim</span>
<span class="t" style="left:892.20px;top:175.80px;color:#fff;font-size:13.33px;font-weight:bold;letter-spacing:-0.163px;">Katsayısı</span>
<span class="t" style="left:1204.29px;top:175.80px;color:#fff;font-size:13.33px;font-weight:bold;letter-spacing:0.075px;">Çevrim</span>
<span class="t" style="left:1253.86px;top:175.80px;color:#fff;font-size:13.33px;font-weight:bold;letter-spacing:-0.268px;">Katsayısı</span>
<span class="t" style="left:1313.86px;top:175.80px;color:#fff;font-size:13.33px;font-weight:bold;letter-spacing:-0.061px;">Referansı</span>
<span class="t" style="left:1630.54px;top:175.80px;color:#fff;font-size:13.33px;font-weight:bold;letter-spacing:-0.892px;">NKD</span>
<span class="t" style="left:1665.86px;top:175.80px;color:#fff;font-size:13.33px;font-weight:bold;letter-spacing:-1.000px;">NKD</span>
<span class="t" style="left:1696.37px;top:175.80px;color:#fff;font-size:13.33px;font-weight:bold;letter-spacing:-0.020px;">Brim</span>
<span class="t" style="left:1850.86px;top:175.80px;color:#fff;font-size:13.33px;font-weight:bold;letter-spacing:-1.051px;">NKD</span>
<span class="t" style="left:1881.86px;top:175.80px;color:#fff;font-size:13.33px;font-weight:bold;letter-spacing:-0.080px;">Referansı</span>
<span class="t" style="left:20.84px;top:207.00px;color:#000;font-size:13.0px;font-weight:normal;letter-spacing:0.539px;">Kategori</span>
<span class="t" style="left:75.78px;top:207.00px;color:#000;font-size:13.0px;font-weight:normal;">1</span>
<span class="t" style="left:111.75px;top:207.00px;color:#000;font-size:13.0px;font-weight:normal;letter-spacing:0.163px;">1.1</span>
<span class="t" style="left:230.65px;top:207.00px;color:#000;font-size:13.0px;font-weight:normal;letter-spacing:1.137px;">İkitelli</span>
<span class="t" style="left:273.57px;top:207.00px;color:#000;font-size:13.0px;font-weight:normal;letter-spacing:-0.022px;">MS</span>
<span class="t" style="left:328.84px;top:207.00px;color:#000;font-size:13.0px;font-weight:normal;letter-spacing:0.611px;">Tüm</span>
<span class="t" style="left:358.46px;top:207.00px;color:#000;font-size:13.0px;font-weight:normal;letter-spacing:-0.372px;">Yıl</span>
<span class="t" style="left:393.84px;top:207.00px;color:#000;font-size:13.0px;font-weight:normal;letter-spacing:0.456px;">Propan</span>
<span class="t" style="left:441.29px;top:207.00px;color:#000;font-size:13.0px;font-weight:normal;letter-spacing:0.721px;">(Ton)</span>
<span class="t" style="left:812.83px;top:207.00px;color:#000;font-size:13.0px;font-weight:normal;letter-spacing:-0.115px;">900</span>
<span class="t" style="left:945.52px;top:207.00px;color:#000;font-size:13.0px;font-weight:normal;">1</span>
<span class="t" style="left:957.57px;top:207.00px;color:#000;font-size:13.0px;font-weight:normal;letter-spacing:1.695px;">N/A</span>
<span class="t" style="left:1654.58px;top:207.00px;color:#000;font-size:13.0px;font-weight:normal;">1</span>
<span class="t" style="left:1666.85px;top:207.00px;color:#000;font-size:13.0px;font-weight:normal;letter-spacing:1.636px;">N/A</span>
<span class="t" style="left:1729.83px;top:207.00px;color:#000;font-size:13.0px;font-weight:normal;letter-spacing:1.645px;">N/A</span>
<span class="t" style="left:20.84px;top:227.00px;color:#000;font-size:13.0px;font-weight:normal;letter-spacing:0.539px;">Kategori</span>
<span class="t" style="left:75.78px;top:227.00px;color:#000;font-size:13.0px;font-weight:normal;">1</span>
<span class="t" style="left:111.75px;top:227.00px;color:#000;font-size:13.0px;font-weight:normal;letter-spacing:0.096px;">1.2.1</span>
<span class="t" style="left:230.65px;top:227.00px;color:#000;font-size:13.0px;font-weight:normal;letter-spacing:1.137px;">İkitelli</span>
<span class="t" style="left:273.57px;top:227.00px;color:#000;font-size:13.0px;font-weight:normal;letter-spacing:-0.022px;">MS</span>
<span class="t" style="left:328.84px;top:227.00px;color:#000;font-size:13.0px;font-weight:normal;letter-spacing:0.611px;">Tüm</span>
<span class="t" style="left:358.46px;top:227.00px;color:#000;font-size:13.0px;font-weight:normal;letter-spacing:-0.372px;">Yıl</span>
<span class="t" style="left:393.84px;top:227.00px;color:#000;font-size:13.0px;font-weight:normal;letter-spacing:0.471px;">Benzin</span>
<span class="t" style="left:438.89px;top:227.00px;color:#000;font-size:13.0px;font-weight:normal;">/</span>
<span class="t" style="left:448.31px;top:227.00px;color:#000;font-size:13.0px;font-weight:normal;letter-spacing:-0.099px;">ON</span>
<span class="t" style="left:470.76px;top:227.00px;color:#000;font-size:13.0px;font-weight:normal;letter-spacing:-0.612px;">ROAD</span>
<span class="t" style="left:509.94px;top:227.00px;color:#000;font-size:13.0px;font-weight:normal;letter-spacing:0.324px;">Araç</span>
<span class="t" style="left:540.10px;top:227.00px;color:#000;font-size:13.0px;font-weight:normal;letter-spacing:0.400px;">(Lt)</span>
<span class="t" style="left:805.63px;top:227.00px;color:#000;font-size:13.0px;font-weight:normal;letter-spacing:-0.128px;">1000</span>
<span class="t" style="left:920.54px;top:227.00px;color:#000;font-size:13.0px;font-weight:normal;letter-spacing:-0.101px;">0,735</span>
<span class="t" style="left:957.76px;top:227.00px;color:#000;font-size:13.0px;font-weight:normal;letter-spacing:0.579px;">Density</span>
<span class="t" style="left:1007.72px;top:227.00px;color:#000;font-size:13.0px;font-weight:normal;">-</span>
<span class="t" style="left:1016.07px;top:227.00px;color:#000;font-size:13.0px;font-weight:normal;letter-spacing:0.408px;">Turkey</span>
<span class="t" style="left:1060.51px;top:227.00px;color:#000;font-size:13.0px;font-weight:normal;">-</span>
<span class="t" style="left:1068.81px;top:227.00px;color:#000;font-size:13.0px;font-weight:normal;letter-spacing:0.863px;">https:</span>
<span class="t" style="left:1104.64px;top:227.00px;color:#000;font-size:13.0px;font-weight:normal;letter-spacing:3.984px;">//</span>
<span class="t" style="left:1116.96px;top:227.00px;color:#000;font-size:13.0px;font-weight:normal;letter-spacing:1.744px;">www.</span>
<span class="t" style="left:1154.04px;top:227.00px;color:#000;font-size:13.0px;font-weight:normal;letter-spacing:0.593px;">resmigazete</span>
<span class="t" style="left:1230.61px;top:227.00px;color:#000;font-size:13.0px;font-weight:normal;letter-spacing:0.773px;">.gov.tr/</span>
<span class="t" style="left:1275.99px;top:227.00px;color:#000;font-size:13.0px;font-weight:normal;letter-spacing:1.055px;">eskiler/</span>
<span class="t" style="left:1324.12px;top:227.00px;color:#000;font-size:13.0px;font-weight:normal;letter-spacing:0.535px;">2011/10/</span>
<span class="t" style="left:1378.12px;top:227.00px;color:#000;font-size:13.0px;font-weight:normal;letter-spacing:0.025px;">20111027-5</span>
<span class="t" style="left:1445.85px;top:227.00px;color:#000;font-size:13.0px;font-weight:normal;letter-spacing:1.343px;">.htm</span>
<span class="t" style="left:1636.84px;top:227.00px;color:#000;font-size:13.0px;font-weight:normal;letter-spacing:0.091px;">44,8</span>
<span class="t" style="left:1667.07px;top:227.00px;color:#000;font-size:13.0px;font-weight:normal;letter-spacing:-0.224px;">TJ/Gg</span>
<span class="t" style="left:1729.84px;top:227.00px;color:#000;font-size:13.0px;font-weight:normal;letter-spacing:0.483px;">Turkish</span>
<span class="t" style="left:1777.62px;top:227.00px;color:#000;font-size:13.0px;font-weight:normal;letter-spacing:-1.022px;">GHG</span>
<span class="t" style="left:1807.51px;top:227.00px;color:#000;font-size:13.0px;font-weight:normal;letter-spacing:0.733px;">Inventory</span>
<span class="t" style="left:1870.65px;top:227.00px;color:#000;font-size:13.0px;font-weight:normal;">-</span>
<span class="t" style="left:1879.01px;top:227.00px;color:#000;font-size:13.0px;font-weight:normal;letter-spacing:0.257px;">1996</span>
<span class="t" style="left:20.84px;top:247.00px;color:#000;font-size:13.0px;font-weight:normal;letter-spacing:0.539px;">Kategori</span>
<span class="t" style="left:75.78px;top:247.00px;color:#000;font-size:13.0px;font-weight:normal;">1</span>
<span class="t" style="left:111.75px;top:247.00px;color:#000;font-size:13.0px;font-weight:normal;letter-spacing:0.096px;">1.2.1</span>
<span class="t" style="left:230.65px;top:247.00px;color:#000;font-size:13.0px;font-weight:normal;letter-spacing:1.137px;">İkitelli</span>
<span class="t" style="left:273.57px;top:247.00px;color:#000;font-size:13.0px;font-weight:normal;letter-spacing:-0.022px;">MS</span>
<span class="t" style="left:328.84px;top:247.00px;color:#000;font-size:13.0px;font-weight:normal;letter-spacing:0.611px;">Tüm</span>
<span class="t" style="left:358.46px;top:247.00px;color:#000;font-size:13.0px;font-weight:normal;letter-spacing:-0.372px;">Yıl</span>
<span class="t" style="left:393.84px;top:247.00px;color:#000;font-size:13.0px;font-weight:normal;letter-spacing:0.471px;">Benzin</span>
<span class="t" style="left:438.89px;top:247.00px;color:#000;font-size:13.0px;font-weight:normal;">/</span>
<span class="t" style="left:448.31px;top:247.00px;color:#000;font-size:13.0px;font-weight:normal;letter-spacing:-0.099px;">ON</span>
<span class="t" style="left:470.76px;top:247.00px;color:#000;font-size:13.0px;font-weight:normal;letter-spacing:-0.612px;">ROAD</span>
<span class="t" style="left:509.94px;top:247.00px;color:#000;font-size:13.0px;font-weight:normal;letter-spacing:0.324px;">Araç</span>
<span class="t" style="left:540.10px;top:247.00px;color:#000;font-size:13.0px;font-weight:normal;letter-spacing:0.400px;">(Lt)</span>
<span class="t" style="left:812.91px;top:247.00px;color:#000;font-size:13.0px;font-weight:normal;letter-spacing:-0.135px;">300</span>
<span class="t" style="left:920.54px;top:247.00px;color:#000;font-size:13.0px;font-weight:normal;letter-spacing:-0.101px;">0,735</span>
<span class="t" style="left:957.76px;top:247.00px;color:#000;font-size:13.0px;font-weight:normal;letter-spacing:0.579px;">Density</span>
<span class="t" style="left:1007.72px;top:247.00px;color:#000;font-size:13.0px;font-weight:normal;">-</span>
<span class="t" style="left:1016.07px;top:247.00px;color:#000;font-size:13.0px;font-weight:normal;letter-spacing:0.408px;">Turkey</span>
<span class="t" style="left:1060.51px;top:247.00px;color:#000;font-size:13.0px;font-weight:normal;">-</span>
<span class="t" style="left:1068.81px;top:247.00px;color:#000;font-size:13.0px;font-weight:normal;letter-spacing:0.863px;">https:</span>
<span class="t" style="left:1104.64px;top:247.00px;color:#000;font-size:13.0px;font-weight:normal;letter-spacing:3.984px;">//</span>
<span class="t" style="left:1116.96px;top:247.00px;color:#000;font-size:13.0px;font-weight:normal;letter-spacing:1.744px;">www.</span>
<span class="t" style="left:1154.04px;top:247.00px;color:#000;font-size:13.0px;font-weight:normal;letter-spacing:0.593px;">resmigazete</span>
<span class="t" style="left:1230.61px;top:247.00px;color:#000;font-size:13.0px;font-weight:normal;letter-spacing:0.773px;">.gov.tr/</span>
<span class="t" style="left:1275.99px;top:247.00px;color:#000;font-size:13.0px;font-weight:normal;letter-spacing:1.055px;">eskiler/</span>
<span class="t" style="left:1324.12px;top:247.00px;color:#000;font-size:13.0px;font-weight:normal;letter-spacing:0.535px;">2011/10/</span>
<span class="t" style="left:1378.12px;top:247.00px;color:#000;font-size:13.0px;font-weight:normal;letter-spacing:0.025px;">20111027-5</span>
<span class="t" style="left:1445.85px;top:247.00px;color:#000;font-size:13.0px;font-weight:normal;letter-spacing:1.343px;">.htm</span>
<span class="t" style="left:1636.84px;top:247.00px;color:#000;font-size:13.0px;font-weight:normal;letter-spacing:0.091px;">44,8</span>
<span class="t" style="left:1667.07px;top:247.00px;color:#000;font-size:13.0px;font-weight:normal;letter-spacing:-0.224px;">TJ/Gg</span>
<span class="t" style="left:1729.84px;top:247.00px;color:#000;font-size:13.0px;font-weight:normal;letter-spacing:0.483px;">Turkish</span>
<span class="t" style="left:1777.62px;top:247.00px;color:#000;font-size:13.0px;font-weight:normal;letter-spacing:-1.022px;">GHG</span>
<span class="t" style="left:1807.51px;top:247.00px;color:#000;font-size:13.0px;font-weight:normal;letter-spacing:0.733px;">Inventory</span>
<span class="t" style="left:1870.65px;top:247.00px;color:#000;font-size:13.0px;font-weight:normal;">-</span>
<span class="t" style="left:1879.01px;top:247.00px;color:#000;font-size:13.0px;font-weight:normal;letter-spacing:0.257px;">1996</span>
<span class="t" style="left:20.84px;top:267.00px;color:#000;font-size:13.0px;font-weight:normal;letter-spacing:0.539px;">Kategori</span>
<span class="t" style="left:75.78px;top:267.00px;color:#000;font-size:13.0px;font-weight:normal;">1</span>
<span class="t" style="left:111.75px;top:267.00px;color:#000;font-size:13.0px;font-weight:normal;letter-spacing:0.096px;">1.2.1</span>
<span class="t" style="left:230.65px;top:267.00px;color:#000;font-size:13.0px;font-weight:normal;letter-spacing:1.137px;">İkitelli</span>
<span class="t" style="left:273.57px;top:267.00px;color:#000;font-size:13.0px;font-weight:normal;letter-spacing:-0.022px;">MS</span>
<span class="t" style="left:328.84px;top:267.00px;color:#000;font-size:13.0px;font-weight:normal;letter-spacing:0.611px;">Tüm</span>
<span class="t" style="left:358.46px;top:267.00px;color:#000;font-size:13.0px;font-weight:normal;letter-spacing:-0.372px;">Yıl</span>
<span class="t" style="left:393.84px;top:267.00px;color:#000;font-size:13.0px;font-weight:normal;letter-spacing:0.471px;">Benzin</span>
<span class="t" style="left:438.89px;top:267.00px;color:#000;font-size:13.0px;font-weight:normal;">/</span>
<span class="t" style="left:448.31px;top:267.00px;color:#000;font-size:13.0px;font-weight:normal;letter-spacing:-0.099px;">ON</span>
<span class="t" style="left:470.76px;top:267.00px;color:#000;font-size:13.0px;font-weight:normal;letter-spacing:-0.612px;">ROAD</span>
<span class="t" style="left:509.94px;top:267.00px;color:#000;font-size:13.0px;font-weight:normal;letter-spacing:0.324px;">Araç</span>
<span class="t" style="left:540.10px;top:267.00px;color:#000;font-size:13.0px;font-weight:normal;letter-spacing:0.400px;">(Lt)</span>
<span class="t" style="left:812.63px;top:267.00px;color:#000;font-size:13.0px;font-weight:normal;letter-spacing:-0.245px;">123</span>
<span class="t" style="left:920.54px;top:267.00px;color:#000;font-size:13.0px;font-weight:normal;letter-spacing:-0.101px;">0,735</span>
<span class="t" style="left:957.76px;top:267.00px;color:#000;font-size:13.0px;font-weight:normal;letter-spacing:0.579px;">Density</span>
<span class="t" style="left:1007.72px;top:267.00px;color:#000;font-size:13.0px;font-weight:normal;">-</span>
<span class="t" style="left:1016.07px;top:267.00px;color:#000;font-size:13.0px;font-weight:normal;letter-spacing:0.408px;">Turkey</span>
<span class="t" style="left:1060.51px;top:267.00px;color:#000;font-size:13.0px;font-weight:normal;">-</span>
<span class="t" style="left:1068.81px;top:267.00px;color:#000;font-size:13.0px;font-weight:normal;letter-spacing:0.863px;">https:</span>
<span class="t" style="left:1104.64px;top:267.00px;color:#000;font-size:13.0px;font-weight:normal;letter-spacing:3.984px;">//</span>
<span class="t" style="left:1116.96px;top:267.00px;color:#000;font-size:13.0px;font-weight:normal;letter-spacing:1.744px;">www.</span>
<span class="t" style="left:1154.04px;top:267.00px;color:#000;font-size:13.0px;font-weight:normal;letter-spacing:0.593px;">resmigazete</span>
<span class="t" style="left:1230.61px;top:267.00px;color:#000;font-size:13.0px;font-weight:normal;letter-spacing:0.773px;">.gov.tr/</span>
<span class="t" style="left:1275.99px;top:267.00px;color:#000;font-size:13.0px;font-weight:normal;letter-spacing:1.055px;">eskiler/</span>
<span class="t" style="left:1324.12px;top:267.00px;color:#000;font-size:13.0px;font-weight:normal;letter-spacing:0.535px;">2011/10/</span>
<span class="t" style="left:1378.12px;top:267.00px;color:#000;font-size:13.0px;font-weight:normal;letter-spacing:0.025px;">20111027-5</span>
<span class="t" style="left:1445.85px;top:267.00px;color:#000;font-size:13.0px;font-weight:normal;letter-spacing:1.343px;">.htm</span>
<span class="t" style="left:1636.84px;top:267.00px;color:#000;font-size:13.0px;font-weight:normal;letter-spacing:0.091px;">44,8</span>
<span class="t" style="left:1667.07px;top:267.00px;color:#000;font-size:13.0px;font-weight:normal;letter-spacing:-0.224px;">TJ/Gg</span>
<span class="t" style="left:1729.84px;top:267.00px;color:#000;font-size:13.0px;font-weight:normal;letter-spacing:0.483px;">Turkish</span>
<span class="t" style="left:1777.62px;top:267.00px;color:#000;font-size:13.0px;font-weight:normal;letter-spacing:-1.022px;">GHG</span>
<span class="t" style="left:1807.51px;top:267.00px;color:#000;font-size:13.0px;font-weight:normal;letter-spacing:0.733px;">Inventory</span>
<span class="t" style="left:1870.65px;top:267.00px;color:#000;font-size:13.0px;font-weight:normal;">-</span>
<span class="t" style="left:1879.01px;top:267.00px;color:#000;font-size:13.0px;font-weight:normal;letter-spacing:0.257px;">1996</span>
<span class="t" style="left:20.84px;top:287.00px;color:#000;font-size:13.0px;font-weight:normal;letter-spacing:0.539px;">Kategori</span>
<span class="t" style="left:75.91px;top:287.00px;color:#000;font-size:13.0px;font-weight:normal;">6</span>
<span class="t" style="left:111.54px;top:287.00px;color:#000;font-size:13.0px;font-weight:normal;letter-spacing:0.231px;">1.3</span>
<span class="t" style="left:230.65px;top:287.00px;color:#000;font-size:13.0px;font-weight:normal;letter-spacing:1.137px;">İkitelli</span>
<span class="t" style="left:273.57px;top:287.00px;color:#000;font-size:13.0px;font-weight:normal;letter-spacing:-0.022px;">MS</span>
<span class="t" style="left:328.84px;top:287.00px;color:#000;font-size:13.0px;font-weight:normal;letter-spacing:0.611px;">Tüm</span>
<span class="t" style="left:358.46px;top:287.00px;color:#000;font-size:13.0px;font-weight:normal;letter-spacing:-0.372px;">Yıl</span>
<span class="t" style="left:820.00px;top:287.00px;color:#000;font-size:13.0px;font-weight:normal;letter-spacing:-0.114px;">10</span>
<span class="t" style="left:20.84px;top:307.00px;color:#000;font-size:13.0px;font-weight:normal;letter-spacing:0.539px;">Kategori</span>
<span class="t" style="left:75.80px;top:307.00px;color:#000;font-size:13.0px;font-weight:normal;">2</span>
<span class="t" style="left:111.77px;top:307.00px;color:#000;font-size:13.0px;font-weight:normal;letter-spacing:0.304px;">2.1</span>
<span class="t" style="left:230.65px;top:307.00px;color:#000;font-size:13.0px;font-weight:normal;letter-spacing:1.137px;">İkitelli</span>
<span class="t" style="left:273.57px;top:307.00px;color:#000;font-size:13.0px;font-weight:normal;letter-spacing:-0.022px;">MS</span>
<span class="t" style="left:328.84px;top:307.00px;color:#000;font-size:13.0px;font-weight:normal;letter-spacing:0.611px;">Tüm</span>
<span class="t" style="left:358.46px;top:307.00px;color:#000;font-size:13.0px;font-weight:normal;letter-spacing:-0.372px;">Yıl</span>
<span class="t" style="left:393.76px;top:307.00px;color:#000;font-size:13.0px;font-weight:normal;letter-spacing:0.564px;">Elektrik</span>
<span class="t" style="left:443.84px;top:307.00px;color:#000;font-size:13.0px;font-weight:normal;letter-spacing:0.040px;">Dağıtım</span>
<span class="t" style="left:492.76px;top:307.00px;color:#000;font-size:13.0px;font-weight:normal;letter-spacing:0.644px;">Hattı</span>
<span class="t" style="left:525.10px;top:307.00px;color:#000;font-size:13.0px;font-weight:normal;letter-spacing:0.672px;">(Kwh)</span>
<span class="t" style="left:805.63px;top:307.00px;color:#000;font-size:13.0px;font-weight:normal;letter-spacing:-0.128px;">1000</span>
<span class="t" style="left:945.52px;top:307.00px;color:#000;font-size:13.0px;font-weight:normal;">1</span>
<span class="t" style="left:957.57px;top:307.00px;color:#000;font-size:13.0px;font-weight:normal;letter-spacing:1.695px;">N/A</span>
<span class="t" style="left:1654.58px;top:307.00px;color:#000;font-size:13.0px;font-weight:normal;">1</span>
<span class="t" style="left:1666.85px;top:307.00px;color:#000;font-size:13.0px;font-weight:normal;letter-spacing:1.636px;">N/A</span>
<span class="t" style="left:1729.83px;top:307.00px;color:#000;font-size:13.0px;font-weight:normal;letter-spacing:1.645px;">N/A</span>
<span class="t" style="left:20.84px;top:327.00px;color:#000;font-size:13.0px;font-weight:normal;letter-spacing:0.539px;">Kategori</span>
<span class="t" style="left:75.80px;top:327.00px;color:#000;font-size:13.0px;font-weight:normal;">2</span>
<span class="t" style="left:111.77px;top:327.00px;color:#000;font-size:13.0px;font-weight:normal;letter-spacing:0.304px;">2.1</span>
<span class="t" style="left:230.65px;top:327.00px;color:#000;font-size:13.0px;font-weight:normal;letter-spacing:1.137px;">İkitelli</span>
<span class="t" style="left:273.57px;top:327.00px;color:#000;font-size:13.0px;font-weight:normal;letter-spacing:-0.022px;">MS</span>
<span class="t" style="left:328.84px;top:327.00px;color:#000;font-size:13.0px;font-weight:normal;letter-spacing:0.611px;">Tüm</span>
<span class="t" style="left:358.46px;top:327.00px;color:#000;font-size:13.0px;font-weight:normal;letter-spacing:-0.372px;">Yıl</span>
<span class="t" style="left:393.76px;top:327.00px;color:#000;font-size:13.0px;font-weight:normal;letter-spacing:0.564px;">Elektrik</span>
<span class="t" style="left:443.84px;top:327.00px;color:#000;font-size:13.0px;font-weight:normal;letter-spacing:0.040px;">Dağıtım</span>
<span class="t" style="left:492.76px;top:327.00px;color:#000;font-size:13.0px;font-weight:normal;letter-spacing:0.644px;">Hattı</span>
<span class="t" style="left:525.10px;top:327.00px;color:#000;font-size:13.0px;font-weight:normal;letter-spacing:0.672px;">(Kwh)</span>
<span class="t" style="left:812.69px;top:327.00px;color:#000;font-size:13.0px;font-weight:normal;letter-spacing:0.617px;">111</span>
<span class="t" style="left:945.52px;top:327.00px;color:#000;font-size:13.0px;font-weight:normal;">1</span>
<span class="t" style="left:957.57px;top:327.00px;color:#000;font-size:13.0px;font-weight:normal;letter-spacing:1.695px;">N/A</span>
<span class="t" style="left:1654.58px;top:327.00px;color:#000;font-size:13.0px;font-weight:normal;">1</span>
<span class="t" style="left:1666.85px;top:327.00px;color:#000;font-size:13.0px;font-weight:normal;letter-spacing:1.636px;">N/A</span>
<span class="t" style="left:1729.83px;top:327.00px;color:#000;font-size:13.0px;font-weight:normal;letter-spacing:1.645px;">N/A</span>
<span class="t" style="left:20.84px;top:347.00px;color:#000;font-size:13.0px;font-weight:normal;letter-spacing:0.539px;">Kategori</span>
<span class="t" style="left:76.06px;top:347.00px;color:#000;font-size:13.0px;font-weight:normal;">3</span>
<span class="t" style="left:111.68px;top:347.00px;color:#000;font-size:13.0px;font-weight:normal;letter-spacing:0.051px;">3.1.3</span>
<span class="t" style="left:230.65px;top:347.00px;color:#000;font-size:13.0px;font-weight:normal;letter-spacing:1.137px;">İkitelli</span>
<span class="t" style="left:273.57px;top:347.00px;color:#000;font-size:13.0px;font-weight:normal;letter-spacing:-0.022px;">MS</span>
<span class="t" style="left:328.84px;top:347.00px;color:#000;font-size:13.0px;font-weight:normal;letter-spacing:0.611px;">Tüm</span>
<span class="t" style="left:358.46px;top:347.00px;color:#000;font-size:13.0px;font-weight:normal;letter-spacing:-0.372px;">Yıl</span>
<span class="t" style="left:393.70px;top:347.00px;color:#000;font-size:13.0px;font-weight:normal;letter-spacing:0.283px;">Uzun</span>
<span class="t" style="left:427.84px;top:347.00px;color:#000;font-size:13.0px;font-weight:normal;letter-spacing:0.587px;">Mesafe</span>
<span class="t" style="left:476.51px;top:347.00px;color:#000;font-size:13.0px;font-weight:normal;letter-spacing:-0.055px;">Uçuş</span>
<span class="t" style="left:508.86px;top:347.00px;color:#000;font-size:13.0px;font-weight:normal;letter-spacing:-0.181px;">(3700</span>
<span class="t" style="left:544.52px;top:347.00px;color:#000;font-size:13.0px;font-weight:normal;letter-spacing:1.820px;">km</span>
<span class="t" style="left:567.07px;top:347.00px;color:#000;font-size:13.0px;font-weight:normal;letter-spacing:0.264px;">den</span>
<span class="t" style="left:594.45px;top:347.00px;color:#000;font-size:13.0px;font-weight:normal;letter-spacing:0.198px;">fazla)</span>
<span class="t" style="left:630.68px;top:347.00px;color:#000;font-size:13.0px;font-weight:normal;letter-spacing:0.955px;">(Ton</span>
<span class="t" style="left:663.11px;top:347.00px;color:#000;font-size:13.0px;font-weight:normal;">*</span>
<span class="t" style="left:672.57px;top:347.00px;color:#000;font-size:13.0px;font-weight:normal;letter-spacing:0.100px;">Km)</span>
<span class="t" style="left:805.63px;top:347.00px;color:#000;font-size:13.0px;font-weight:normal;letter-spacing:-0.080px;">1200</span>
<span class="t" style="left:945.52px;top:347.00px;color:#000;font-size:13.0px;font-weight:normal;">1</span>
<span class="t" style="left:957.57px;top:347.00px;color:#000;font-size:13.0px;font-weight:normal;letter-spacing:1.695px;">N/A</span>
<span class="t" style="left:1654.58px;top:347.00px;color:#000;font-size:13.0px;font-weight:normal;">1</span>
<span class="t" style="left:1666.85px;top:347.00px;color:#000;font-size:13.0px;font-weight:normal;letter-spacing:1.636px;">N/A</span>
<span class="t" style="left:1729.83px;top:347.00px;color:#000;font-size:13.0px;font-weight:normal;letter-spacing:1.645px;">N/A</span>
<span class="t" style="left:20.84px;top:367.00px;color:#000;font-size:13.0px;font-weight:normal;letter-spacing:0.539px;">Kategori</span>
<span class="t" style="left:75.91px;top:367.00px;color:#000;font-size:13.0px;font-weight:normal;">6</span>
<span class="t" style="left:111.68px;top:367.00px;color:#000;font-size:13.0px;font-weight:normal;letter-spacing:0.041px;">3.1.5</span>
<span class="t" style="left:230.65px;top:367.00px;color:#000;font-size:13.0px;font-weight:normal;letter-spacing:1.137px;">İkitelli</span>
<span class="t" style="left:273.57px;top:367.00px;color:#000;font-size:13.0px;font-weight:normal;letter-spacing:-0.022px;">MS</span>
<span class="t" style="left:328.84px;top:367.00px;color:#000;font-size:13.0px;font-weight:normal;letter-spacing:0.611px;">Tüm</span>
<span class="t" style="left:358.46px;top:367.00px;color:#000;font-size:13.0px;font-weight:normal;letter-spacing:-0.372px;">Yıl</span>
<span class="t" style="left:801.43px;top:367.00px;color:#000;font-size:13.0px;font-weight:normal;letter-spacing:0.124px;">100,2</span>
<span class="t" style="left:116.97px;top:978.80px;color:#1f1f1f;font-size:13.4px;font-weight:normal;-webkit-text-stroke:0.35px #1f1f1f;letter-spacing:0.134px;">Referanslar</span>
<span class="t" style="left:215.68px;top:981.60px;color:#2b2b2b;font-size:13.5px;font-weight:normal;letter-spacing:-0.200px;">Sızıntı Gazlar</span>
<span class="t" style="left:321.67px;top:981.60px;color:#2b2b2b;font-size:13.5px;font-weight:normal;letter-spacing:0.217px;">Toplam Emisyonlar</span>
</body></html>
